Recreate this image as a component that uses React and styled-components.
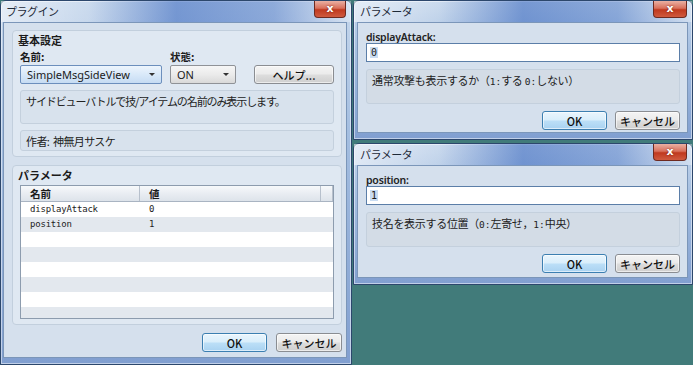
import styled, { createGlobalStyle } from "styled-components";

const Global = createGlobalStyle`
  html, body { margin: 0; padding: 0; background: #417b7a; overflow: hidden; }
  body {
    font-family: "Noto Sans", "Noto Sans CJK JP", sans-serif;
    font-size: 11px;
    color: #1b1b1b;
  }
`;

const Desktop = styled.div`
  display: flex;
  gap: 1px;
  width: 693px;
  height: 365px;
  background: #417b7a;
`;

const Column = styled.div`
  display: flex;
  flex-direction: column;
  gap: 3px;
  width: 340px;
`;

const Frame = styled.div`
  box-sizing: border-box;
  width: ${(p) => p.$width}px;
  height: ${(p) => p.$height}px;
  display: flex;
  flex-direction: column;
  border: 1px solid #2c476c;
  border-radius: 6px 6px 0 0;
  background: linear-gradient(180deg, #c6d7ec 0%, #a5bfe1 35%, #819fd0 100%);
  box-shadow: inset 0 0 0 1px rgba(255, 255, 255, 0.5);
`;

const TitleBar = styled.div`
  height: 21px;
  display: flex;
  justify-content: space-between;
  align-items: flex-start;
  padding-left: ${(p) => p.$pad}px;
  background: linear-gradient(
    90deg,
    rgba(255, 255, 255, 0.55) 0%,
    rgba(255, 255, 255, 0.1) 25%,
    rgba(40, 90, 185, 0.5) 50%,
    rgba(40, 90, 185, 0.35) 78%,
    rgba(255, 255, 255, 0.35) 100%
  );
`;

const Title = styled.span`
  font-family: "Noto Sans CJK JP", sans-serif;
  font-size: 11px;
  line-height: 21px;
  color: #1e2a38;
  letter-spacing: -0.5px;
`;

const Close = styled.div`
  width: ${(p) => p.$w}px;
  height: 17px;
  margin-right: 5px;
  box-sizing: border-box;
  border: 1px solid #6e2a20;
  border-top: none;
  border-radius: 0 0 4px 4px;
  background: linear-gradient(180deg, #eab0a3 0%, #d9705c 45%, #c0391f 55%, #cf5a3f 100%);
  color: #fff;
  font-family: "DejaVu Sans", sans-serif;
  font-weight: bold;
  font-size: 11px;
  line-height: 15px;
  text-align: center;
  text-shadow: 0 0 2px #6e1a10;
`;

const FrameBody = styled.div`
  flex: 1;
  display: flex;
  padding: 0 4px 6px ${(p) => p.$left}px;
`;

const Client = styled.div`
  flex: 1;
  display: flex;
  flex-direction: column;
  background: #d5e0ed;
  border: 1px solid #7b96b9;
  padding: ${(p) => p.$pad};
`;

const Group = styled.div`
  box-sizing: border-box;
  height: ${(p) => p.$h}px;
  margin-top: ${(p) => p.$mt || 0}px;
  border: 1px solid #c2cfdd;
  border-radius: 4px;
  background: #dfe8f2;
  padding: 2px 7px 5px 7px;
  display: flex;
  flex-direction: column;
`;

const GroupTitle = styled.div`
  font-family: "Noto Sans CJK JP", sans-serif;
  font-weight: bold;
  font-size: 11px;
  line-height: 14px;
  margin-left: -2px;
`;

const FieldGrid = styled.div`
  display: grid;
  grid-template-columns: 142px 66px 1fr;
  column-gap: 8px;
  margin-top: 3px;
`;

const FieldLabel = styled.div`
  font-family: "Noto Sans CJK JP", sans-serif;
  font-weight: bold;
  font-size: 10.5px;
  line-height: 14px;
`;

const Select = styled.div`
  box-sizing: border-box;
  height: 19px;
  margin-top: 1px;
  display: flex;
  align-items: center;
  justify-content: space-between;
  padding: 0 6px;
  border: 1px solid ${(p) => (p.$focus ? "#6c8fbd" : "#8f9297")};
  border-radius: 2px;
  background: ${(p) =>
    p.$focus
      ? "linear-gradient(180deg, #eef5fd 0%, #d9e9f9 50%, #c6dcf3 100%)"
      : "linear-gradient(180deg, #f6f6f6 0%, #ebebeb 50%, #d9d9d9 100%)"};
  font-size: 11px;
  &::after {
    content: "";
    border-left: 3px solid transparent;
    border-right: 3px solid transparent;
    border-top: 3px solid #333;
  }
`;

const Button = styled.div`
  box-sizing: border-box;
  width: ${(p) => p.$w}px;
  height: 19px;
  display: flex;
  align-items: center;
  justify-content: center;
  border: 1px solid ${(p) => (p.$primary ? "#3c7fb1" : "#8a8d92")};
  border-radius: 3px;
  background: ${(p) =>
    p.$primary
      ? "linear-gradient(180deg, #eaf5fd 0%, #d9eefb 48%, #bcdff7 52%, #a9d2f1 100%)"
      : "linear-gradient(180deg, #f4f4f4 0%, #ebebeb 48%, #dddddd 52%, #cfcfcf 100%)"};
  box-shadow: inset 0 0 0 1px rgba(255, 255, 255, 0.6);
  font-family: "Noto Sans CJK JP", sans-serif;
  font-size: 11px;
  font-weight: 500;
  color: #111;
`;

const HelpButton = styled(Button)`
  margin-top: 1px;
  justify-self: end;
`;

const InfoBox = styled.div`
  box-sizing: border-box;
  height: ${(p) => p.$h}px;
  margin-top: ${(p) => p.$mt}px;
  padding: 3px 5px;
  border: 1px solid #c4d0dd;
  border-radius: 3px;
  background: ${(p) => p.$bg || "#d8e2ed"};
  font-family: "Noto Sans CJK JP", sans-serif;
  font-size: 11px;
  line-height: 15px;
  letter-spacing: ${(p) => p.$ls}px;
  white-space: pre;
  color: #222;
`;

const Mono = styled.span`
  font-family: "DejaVu Sans Mono", monospace;
  font-size: 9.5px;
  letter-spacing: 0;
`;

const Table = styled.div`
  margin-top: 3px;
  border: 1px solid #8d9cae;
  background: #fff;
  height: 134px;
  overflow: hidden;
`;

const HeadRow = styled.div`
  display: grid;
  grid-template-columns: 119px 1fr 12px;
  height: 15px;
  background: linear-gradient(180deg, #f7f9fb 0%, #e9edf2 50%, #dde3ea 100%);
  border-bottom: 1px solid #a9b4c2;
`;

const HeadCell = styled.div`
  padding-left: 9px;
  border-right: 1px solid #b7c0cc;
  font-family: "Noto Sans CJK JP", sans-serif;
  font-weight: bold;
  font-size: 10.5px;
  line-height: 15px;
`;

const Row = styled.div`
  display: grid;
  grid-template-columns: 119px 1fr;
  height: 15px;
  background: ${(p) => (p.$odd ? "#e3e8ee" : "#ffffff")};
`;

const Cell = styled.div`
  padding-left: 9px;
  font-family: "DejaVu Sans Mono", monospace;
  font-size: 9px;
  letter-spacing: -0.2px;
  line-height: 15px;
  color: #222;
`;

const ButtonRow = styled.div`
  display: flex;
  justify-content: flex-end;
  gap: ${(p) => p.$gap}px;
  margin-top: ${(p) => p.$mt}px;
`;

const ParamLabel = styled.div`
  font-family: "Noto Sans", "Noto Sans CJK JP", sans-serif;
  font-weight: 600;
  font-size: 10.5px;
  line-height: 12px;
  letter-spacing: -0.2px;
  color: #222;
`;

const Input = styled.div`
  box-sizing: border-box;
  height: 19px;
  border: 1px solid #5b7ea8;
  background: #fff;
  padding-left: 3px;
  display: flex;
  align-items: center;
`;

const Selected = styled.span`
  font-family: "DejaVu Sans Mono", monospace;
  font-size: 10px;
  background: #c9dcf2;
  padding: 0 1px;
`;

function Window({ width, height, title, closeW, left, children }) {
  return (
    <Frame $width={width} $height={height}>
      <TitleBar $pad={left + 3}>
        <Title>{title}</Title>
        <Close $w={closeW}>x</Close>
      </TitleBar>
      <FrameBody $left={left}>{children}</FrameBody>
    </Frame>
  );
}

function ParamDialog({ height, name, value, children }) {
  return (
    <Window width={340} height={height} title="パラメータ" closeW={34} left={3}>
      <Client $pad="8px 7px 2px 8px">
        <ParamLabel>{name}:</ParamLabel>
        <Input>
          <Selected>{value}</Selected>
        </Input>
        <InfoBox $h={35} $mt={7} $bg="#d3dce6" $ls={-0.3}>
          {children}
        </InfoBox>
        <ButtonRow $gap={8} $mt={7}>
          <Button $w={65} $primary>OK</Button>
          <Button $w={65}>キャンセル</Button>
        </ButtonRow>
      </Client>
    </Window>
  );
}

const params = [
  { name: "displayAttack", value: "0" },
  { name: "position", value: "1" },
];

export default function App() {
  const rows = Array.from({ length: 8 }, (_, i) => params[i] || null);
  return (
    <>
      <Global />
      <Desktop>
        <Window width={352} height={365} title="プラグイン" closeW={32} left={2}>
          <Client $pad="7px 4px 0 8px">
            <Group $h={127}>
              <GroupTitle>基本設定</GroupTitle>
              <FieldGrid>
                <FieldLabel>名前:</FieldLabel>
                <FieldLabel>状態:</FieldLabel>
                <span />
                <Select $focus>SimpleMsgSideView</Select>
                <Select>ON</Select>
                <HelpButton $w={80}>ヘルプ...</HelpButton>
              </FieldGrid>
              <InfoBox $h={36} $mt={6} $ls={-1.1}>
                サイドビューバトルで技/アイテムの名前のみ表示します。
              </InfoBox>
              <InfoBox $h={21} $mt={6} $ls={-0.6}>
                {"作者:  神無月サスケ"}
              </InfoBox>
            </Group>
            <Group $h={160} $mt={8}>
              <GroupTitle>パラメータ</GroupTitle>
              <Table>
                <HeadRow>
                  <HeadCell>名前</HeadCell>
                  <HeadCell>値</HeadCell>
                  <HeadCell />
                </HeadRow>
                {rows.map((r, i) => (
                  <Row key={i} $odd={i % 2 === 1}>
                    <Cell>{r ? r.name : ""}</Cell>
                    <Cell>{r ? r.value : ""}</Cell>
                  </Row>
                ))}
              </Table>
            </Group>
            <ButtonRow $gap={9} $mt={8}>
              <Button $w={65} $primary>OK</Button>
              <Button $w={66}>キャンセル</Button>
            </ButtonRow>
          </Client>
        </Window>
        <Column>
          <ParamDialog height={140} name="displayAttack" value="0">
            通常攻撃も表示するか（<Mono>1:</Mono>する <Mono>0:</Mono>しない）
          </ParamDialog>
          <ParamDialog height={142} name="position" value="1">
            技名を表示する位置（<Mono>0:</Mono>左寄せ，<Mono>1:</Mono>中央）
          </ParamDialog>
        </Column>
      </Desktop>
    </>
  );
}
